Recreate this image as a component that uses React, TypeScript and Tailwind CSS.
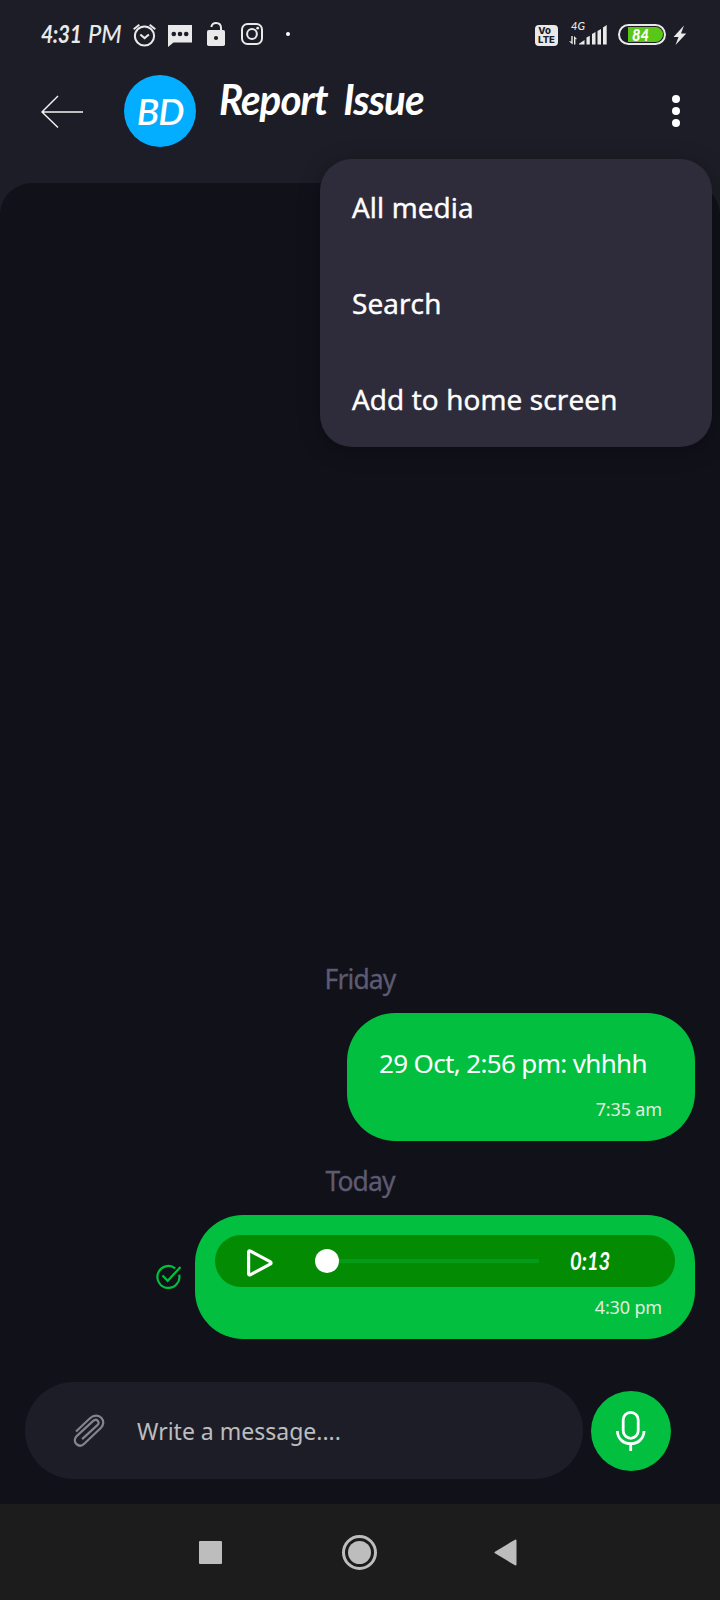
import type { ReactNode } from "react";

const script = "font-['Lato','Open_Sans',sans-serif] italic whitespace-nowrap";

function StatusIcon({ x, w, children, className = "" }: { x: number; w: number; children: ReactNode; className?: string }) {
  return (
    <svg width={w} height={28} viewBox={`${x} 20 ${w} 28`} className={`shrink-0 ${className}`} fill="none" stroke="#e9e9e9" strokeWidth={2}>
      {children}
    </svg>
  );
}

function StatusBar() {
  return (
    <div className="flex h-[68px] pl-[41px] pt-5">
      <div className="flex w-[91px] shrink-0 text-[24px] leading-[27px] text-[#e9e9e9]">
        <span className={`${script} w-[47px] origin-left scale-x-[0.88] font-bold tracking-[-0.5px]`}>4:31</span>
        <span className={`${script} origin-left scale-x-[0.98] font-medium`}>PM</span>
      </div>
      <StatusIcon x={132} w={26}>
        <circle cx="144.5" cy="36" r="9.6" />
        <path d="M140.3 34.5l4.3 3.6 4.3-3.6M133.7 29.2l5.6-4.4M155.3 29.2l-5.6-4.4" />
      </StatusIcon>
      <StatusIcon x={168} w={24} className="ml-[10px]">
        <path d="M168 25h24v17.5h-18.5L168 47z" fill="#e9e9e9" stroke="none" />
        <g fill="#1d1d27" stroke="none"><circle cx="173.8" cy="34" r="2.3" /><circle cx="180" cy="34" r="2.3" /><circle cx="186.2" cy="34" r="2.3" /></g>
      </StatusIcon>
      <StatusIcon x={206} w={20} className="ml-[14px]">
        <rect x="207" y="30" width="18" height="16" rx="1.8" fill="#e9e9e9" stroke="none" />
        <circle cx="216" cy="38" r="2.1" fill="#1d1d27" stroke="none" />
        <path d="M211.3 27c.5-2.6 2.3-4 4.7-4 3 0 5 2 5 5v3" />
      </StatusIcon>
      <StatusIcon x={240} w={24} className="ml-[14px]">
        <rect x="242" y="24" width="20" height="20" rx="5.5" />
        <circle cx="252" cy="34" r="4.9" />
        <circle cx="257.7" cy="28.2" r="1.4" fill="#e9e9e9" stroke="none" />
      </StatusIcon>
      <StatusIcon x={284} w={8} className="ml-[20px]">
        <circle cx="288" cy="34" r="2" fill="#fff" stroke="none" />
      </StatusIcon>
      <div className="ml-[243px] mt-[5px] h-[21px] w-[23px] shrink-0 rounded-[4px] bg-[#e9e9e9] pt-[2px] text-center font-['Inter',sans-serif] text-[9.5px] font-extrabold leading-[8.5px] text-[#1d1d27]">
        <div className="-ml-[4px]">Vo</div>
        <div>LTE</div>
      </div>
      <div className="ml-[10px] flex w-[40px] shrink-0 flex-col">
        <span className={`${script} h-[13px] pl-[3px] text-[11px] font-medium leading-[12px] text-[#e9e9e9]`}>4G</span>
        <svg width="40" height="26" viewBox="568 22 40 26" fill="#e9e9e9" className="-mt-[11px] shrink-0">
          <path d="M571.3 36h1.4v8.500l-3.800-3.200 2.400.300zM574 36l3.200 3.200-1.800-.300V44.500H574zM579 44.500v-.800l5.500-3.700v4.500zM586.500 37.500l3.300-1.700v8.700h-3.300zM592 34l3.500-2v12.500H592zM597.500 31l3.500-2v15.500h-3.500zM603 27.500l3.700-2.500v19.500H603z" />
        </svg>
      </div>
      <div className="ml-[10px] mt-[4px] flex h-[21px] w-[48px] shrink-0 items-center rounded-full border-2 border-[#e9e9e9] pl-[8px]">
        <div className="flex h-[15px] w-[35px] items-center rounded-l-[2px] rounded-r-full bg-[#58c716] pl-[4px]">
          <span className={`${script} origin-left scale-x-[0.86] text-[17px] font-black leading-[15px] text-white`}>84</span>
        </div>
      </div>
      <StatusIcon x={673} w={14} className="ml-[7px]">
        <path d="M684 25.500L673.500 37h5l-3 8L686.300 33.500h-5.300z" fill="#e9e9e9" stroke="none" />
      </StatusIcon>
    </div>
  );
}

function Header() {
  return (
    <div className="relative flex h-[115px] pl-[40px]">
      <svg width="44" height="36" viewBox="40 94 44 36" fill="none" stroke="#f4f4f4" strokeWidth="1.4" className="mt-[26px] shrink-0">
        <path d="M83 112H42M58 96L42 112l16 15.500" />
      </svg>
      <div className="ml-[40px] mt-[7px] flex size-[72px] shrink-0 items-center justify-center rounded-full bg-[#03adff]">
        <span className={`${script} text-[37px] font-semibold leading-[44px] tracking-[-1px] text-white`}>BD</span>
      </div>
      <h1 className={`${script} ml-[23px] mt-[6px] h-[50px] origin-left scale-x-[0.96] text-[42px] font-bold leading-[50px] tracking-[-1px] text-white`}>Report&nbsp; Issue</h1>
      <div className="absolute right-[40px] top-[27px] flex flex-col gap-1">
        <i className="size-2 rounded-full bg-white" />
        <i className="size-2 rounded-full bg-white" />
        <i className="size-2 rounded-full bg-white" />
      </div>
      <div className="absolute right-2 top-[91px] z-10 w-[392px] rounded-[32px] bg-[#2e2c3a] font-['Open_Sans',sans-serif] text-[28px] tracking-[0.13px] text-white shadow-[0_4px_22px_rgba(0,0,0,0.3)] [-webkit-text-stroke:0.5px_white]">
        {["All media", "Search", "Add to home screen"].map((label) => (
          <div key={label} className="h-24 pl-8 leading-[96px]">{label}</div>
        ))}
      </div>
    </div>
  );
}

function Day({ children }: { children: ReactNode }) {
  return <div className="h-[37px] text-center text-[26.5px] leading-[39px] tracking-[-0.9px] text-[#5d5b72] [-webkit-text-stroke:0.3px_#5d5b72]">{children}</div>;
}

function Conversation() {
  return (
    <div className="flex h-[1321px] flex-col rounded-t-[32px] bg-[#11111a] font-['Noto_Sans',sans-serif]">
      <div className="mt-[777px]"><Day>Friday</Day></div>
      <div className="ml-[347px] mt-4 h-[128px] w-[348px] rounded-[48px] bg-[#03bf3f] pl-8 pr-[33px] pt-[31px]">
        <p className="h-[37px] whitespace-nowrap text-[26px] leading-[38px] tracking-[-0.65px] text-white">29 Oct, 2:56 pm: vhhhh</p>
        <p className="mt-4 text-right text-[18px] leading-6 tracking-[-0.15px] text-[#e5ecdf]">7:35 am</p>
      </div>
      <div className="mt-[21px]"><Day>Today</Day></div>
      <div className="mt-4 flex">
        <svg width="26" height="26" viewBox="156 1264 26 26" fill="none" stroke="#03bf3f" strokeWidth="2.200" className="ml-[156px] mt-[49px] shrink-0">
          <path d="M175.200 1268.300a11 11 0 1 0 4 6.500M162.500 1275.500l5.200 5.300L180.500 1267" />
        </svg>
        <div className="ml-[13px] h-[124px] w-[500px] rounded-[48px] bg-[#03bf3f] p-5">
          <div className="flex h-[52px] rounded-full bg-[#038c03]">
            <svg width="30" height="34" viewBox="245 1246 30 34" fill="none" stroke="#fff" strokeWidth="3.200" strokeLinejoin="round" className="ml-[30px] mt-[11px] shrink-0">
              <path d="M248.600 1252.200v21.300q0 2.200 2 1.100l19.500-10.400q2-1.300 0-2.600l-19.500-10.400q-2-1.100-2 1z" />
            </svg>
            <div className="ml-10 flex w-[224px] items-center">
              <i className="size-6 rounded-full bg-white" />
              <i className="h-1 flex-1 bg-[#039b17]" />
            </div>
            <span className={`${script} ml-[31px] origin-left scale-x-[0.84] text-[24px] font-bold leading-[51px] text-white`}>0:13</span>
          </div>
          <p className="mt-2 pr-[13px] text-right text-[18px] leading-6 tracking-[-0.15px] text-[#e5ecdf]">4:30 pm</p>
        </div>
      </div>
      <div className="mt-[43px] flex items-center">
        <div className="ml-[25px] flex h-[97px] w-[558px] items-center rounded-full bg-[#1d1d27] pl-[47px]">
          <svg width="34" height="34" viewBox="72 1414 34 34" fill="none" stroke="#84838e" strokeWidth="2.200" strokeLinejoin="round" className="shrink-0">
            <path d="M76 1431.500L90 1418.300c4-3.800 9-3 11.500-.300 2.500 2.800 2.300 7-.500 9.700L84.500 1443.500c-2.800 2.700-6 2.600-8.200.400-2.200-2.300-2-5.600.600-8l16.300-15c1.700-1.500 3.500-1.200 4.500-.100 1.200 1.300 1 3.100-.300 4.300l-15.300 14" />
          </svg>
          <span className="ml-[31px] text-[23px] leading-8 text-[#bdbdbd]">Write a message....</span>
        </div>
        <div className="ml-2 flex size-20 items-center justify-center rounded-full bg-[#03bf3f]">
          <svg width="32" height="44" viewBox="615 1409 32 44" fill="none" stroke="#fff" strokeWidth="2.800">
            <rect x="623.200" y="1412.300" width="15" height="26" rx="7.500" />
            <path d="M617.300 1431c.5 8 6.200 12.700 13.400 12.700s12.900-4.700 13.400-12.700M630.700 1443.500v7.500" />
          </svg>
        </div>
      </div>
    </div>
  );
}

function NavigationBar() {
  return (
    <div className="flex h-24 items-center bg-[#1c1c1c] pl-[199px]">
      <i className="size-[23px] rounded-[1px] bg-[#bdbdbd]" />
      <div className="ml-[120px] flex size-[35px] items-center justify-center rounded-full border-[3px] border-[#bdbdbd]">
        <i className="size-[23px] rounded-full bg-[#bdbdbd]" />
      </div>
      <svg width="23" height="27" viewBox="0 0 23 27" className="ml-[117px]">
        <path d="M21.500 1.500v24L1.500 13.500z" fill="#bdbdbd" stroke="#bdbdbd" strokeWidth="2" strokeLinejoin="round" />
      </svg>
    </div>
  );
}

export default function App() {
  return (
    <div className="h-[1600px] w-[720px] overflow-hidden bg-[#1d1d27]">
      <StatusBar />
      <Header />
      <Conversation />
      <NavigationBar />
    </div>
  );
}
